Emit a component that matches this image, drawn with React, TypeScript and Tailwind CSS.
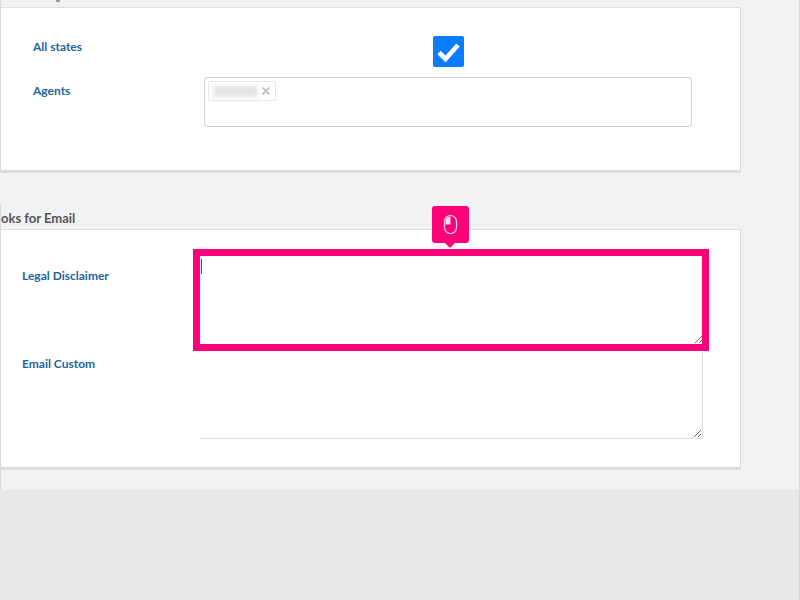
const labelClass = "text-[12px] leading-[16px] font-bold text-[#1d659d]";

const MouseBadge = () => (
  <div className="absolute left-[232px] top-[-43px] w-[37px] h-[37px] rounded-[3px] bg-[#ff0078] flex items-center justify-center">
    <svg width="15" height="21" viewBox="0 0 15 21" fill="none">
      <rect x="1.5" y="1.5" width="12" height="18" rx="6" stroke="#ffd9ea" strokeWidth="1.2" />
      <path d="M2.5 10.5V7.5C2.5 4.8 4.5 2.6 7.5 2.5V10.5H2.5Z" fill="#ffd9ea" />
    </svg>
    <div className="absolute left-[13px] bottom-[-5px] w-0 h-0 border-x-[5px] border-x-transparent border-t-[5px] border-t-[#ff0078]" />
  </div>
);

const App = () => {
  return (
    <div className="w-[800px] h-[600px] overflow-hidden flex flex-col bg-[#f1f2f4] font-['Lato',sans-serif] border-r border-[#d9dadc]">
      <div className="h-[7px] shrink-0 border-l border-[#d9dadc] relative">
        <div className="absolute left-[55px] top-0 w-[4px] h-[2px] bg-[#9a9a9a]" />
      </div>

      <div className="w-[741px] h-[166px] shrink-0 bg-white border border-t-[#dedfe1] border-x-[#d9dadc] border-b-[3px] border-b-[#dcdcdc] pl-[32px] pt-[28px]">
        <div className="flex h-[32px]">
          <div className="w-[171px] mt-[-3px]"><span className={labelClass}>All states</span></div>
          <div className="w-[488px] flex justify-center">
            <div className="w-[31px] h-[31px] rounded-[2px] bg-[#0a7cff] flex items-center justify-center">
              <svg width="25" height="21" viewBox="0 0 25 21" fill="none">
                <path d="M3 11.5L9.5 18L22 4" stroke="#fff" strokeWidth="4.6" />
              </svg>
            </div>
          </div>
        </div>
        <div className="flex mt-[9px]">
          <div className="w-[171px]"><span className={labelClass}>Agents</span></div>
          <div className="w-[488px] h-[50px] rounded-[4px] border border-[#cfcfcf] p-[3px]">
            <div className="w-[68px] h-[20px] border border-[#e6e6e6] rounded-[2px] flex items-center pl-[4px] gap-[3px]">
              <div className="w-[45px] h-[11px] bg-[#e4e4e4] blur-[2px]" />
              <svg width="10" height="10" viewBox="0 0 10 10" fill="none">
                <path d="M1.5 1.5L8.5 8.5M8.5 1.5L1.5 8.5" stroke="#c4c4c4" strokeWidth="1.8" />
              </svg>
            </div>
          </div>
        </div>
      </div>

      <div className="h-[25px] mt-[31px] shrink-0 border-l border-[#d9dadc] text-[13px] leading-[16px] font-bold text-[#555555]">
        <div className="whitespace-nowrap pt-[6px]">oks for Email</div>
      </div>

      <div className="w-[741px] h-[241px] shrink-0 bg-white border border-t-[#dedfe1] border-x-[#d9dadc] border-b-[3px] border-b-[#dcdcdc] pl-[21px] pt-[19px]">
        <div className="flex h-[95px]">
          <div className="w-[178px] pt-[13px]"><span className={labelClass}>Legal Disclaimer</span></div>
          <div className="relative w-[503px] h-[95px]">
            <MouseBadge />
            <textarea className="block w-[503px] h-[95px] outline-none bg-white border-0" defaultValue="" />
            <div className="absolute left-[-7px] top-0 w-[516px] h-[102px] border-[7px] border-[#ff0078] pointer-events-none" />
            <div className="absolute left-[1px] top-[10px] w-px h-[15px] bg-[#555555]" />
          </div>
        </div>
        <div className="flex">
          <div className="w-[178px] pt-[6px]"><span className={labelClass}>Email Custom</span></div>
          <textarea className="block w-[503px] h-[95px] outline-none bg-white border-r border-b border-[#dddddd]" defaultValue="" />
        </div>
      </div>

      <div className="h-[20px] shrink-0 border-l border-[#d9dadc]" />
      <div className="flex-1 bg-[#e8e8e8]" />
    </div>
  );
};

export default App;
